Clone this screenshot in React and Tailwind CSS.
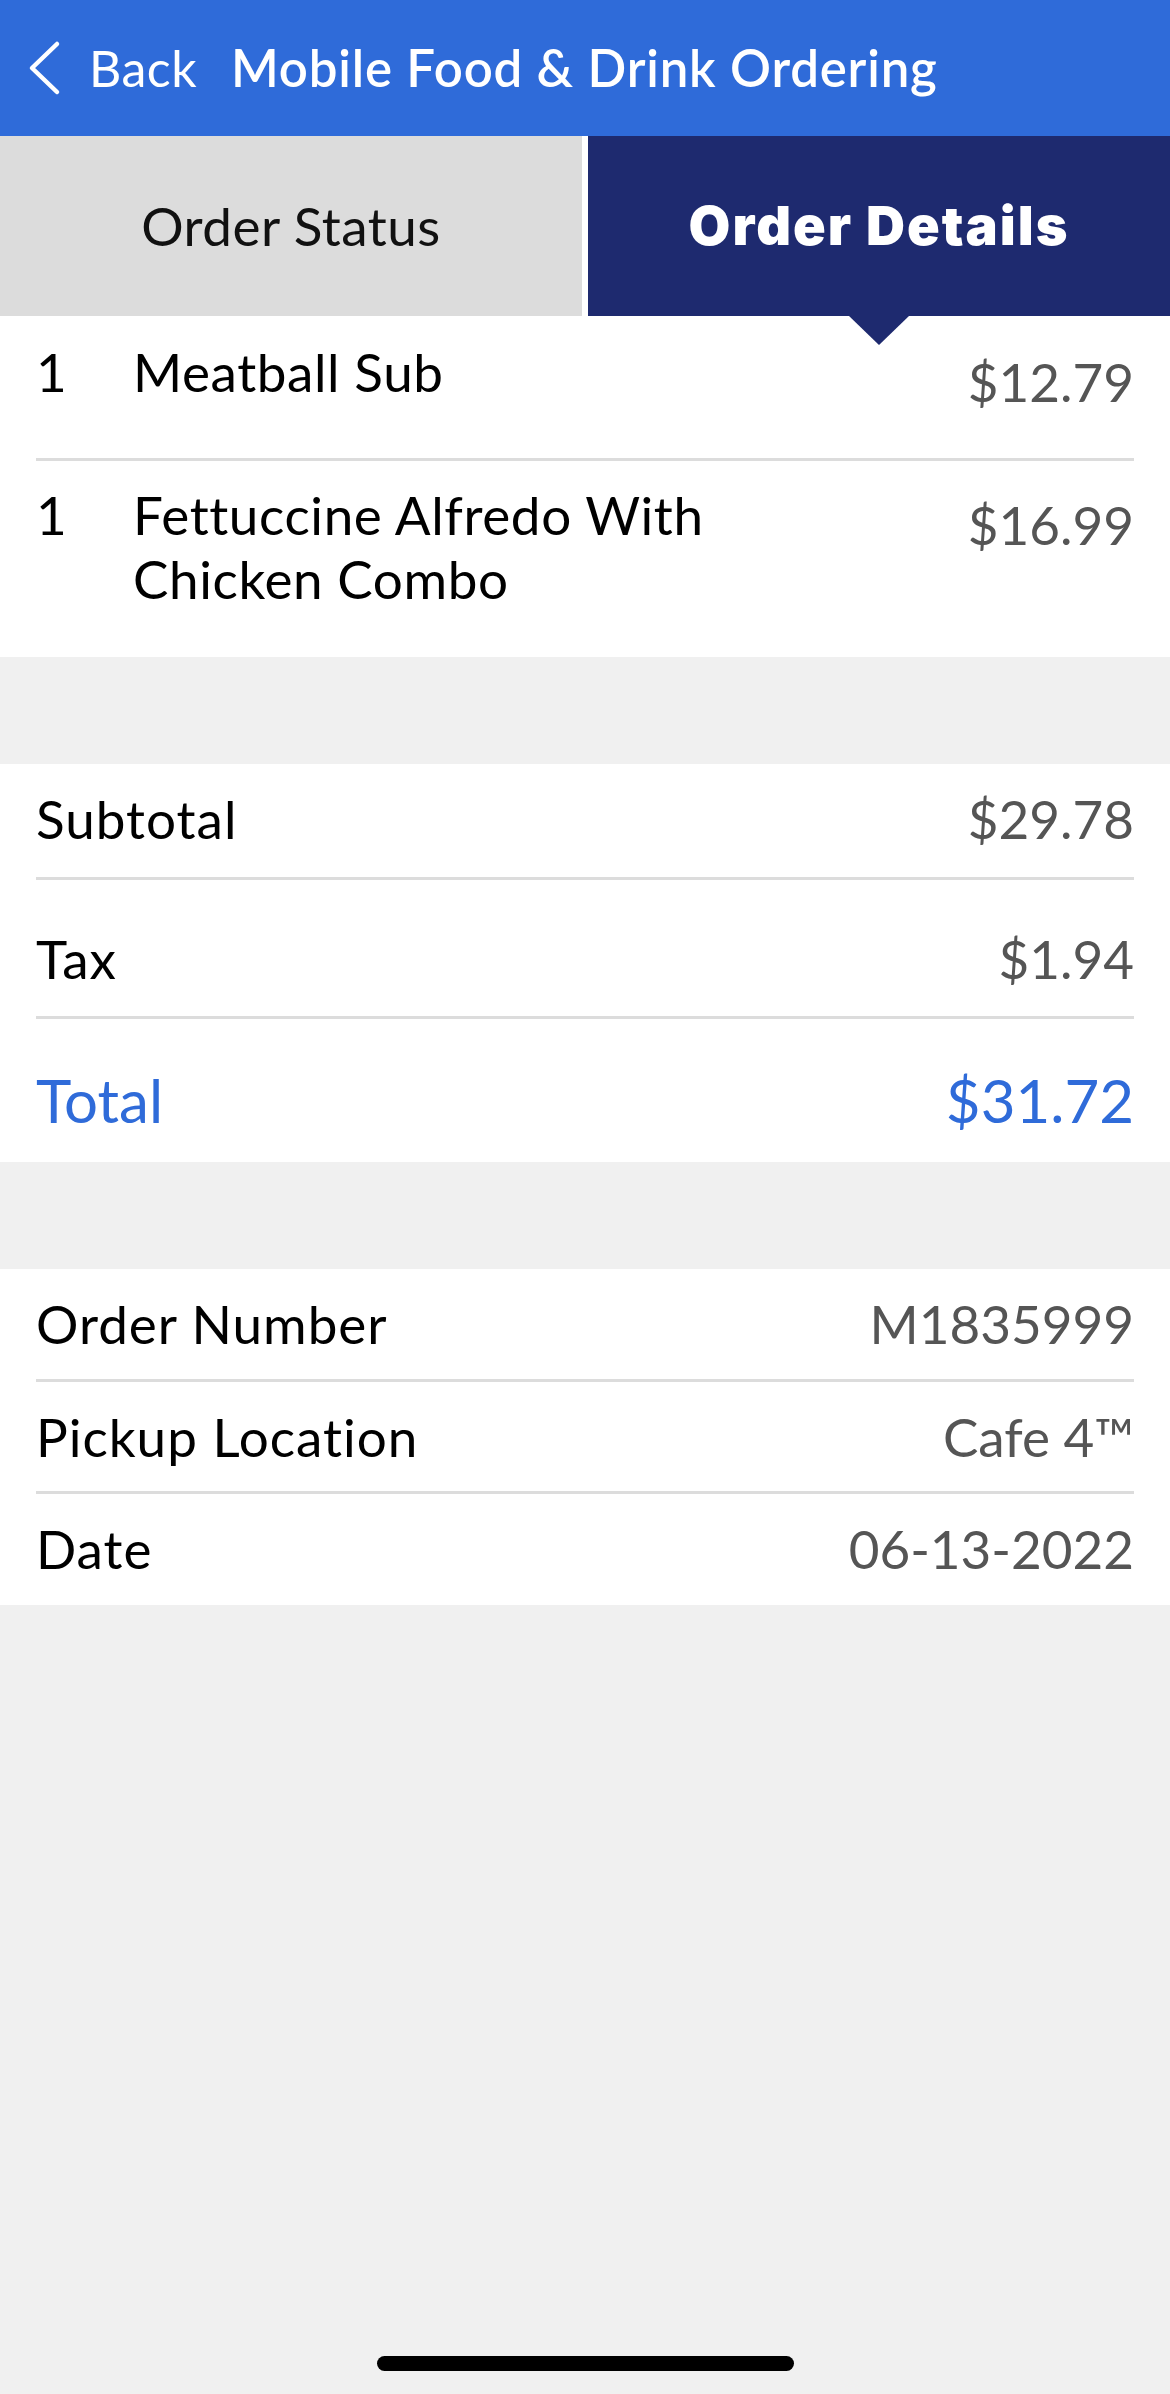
import React from "react";

const font = { fontFamily: "Lato, 'Noto Sans', 'Liberation Sans', sans-serif" };
const heavy = { fontFamily: "Inter, Lato, 'Noto Sans', sans-serif" };

function Sep() {
  return <div className="h-[3px] bg-[#dcdcdc]" />;
}

function Row({ label, value, pt, pb }) {
  return (
    <div className={`flex justify-between text-[53px] leading-[60px] ${pt} ${pb}`}>
      <span className="text-black tracking-[1px]">{label}</span>
      <span className="text-[#555]">{value}</span>
    </div>
  );
}

export default function App() {
  return (
    <div className="relative w-[1170px] h-[2394px] bg-[#f0f0f0] flex flex-col overflow-hidden" style={font}>
      {/* Header */}
      <div className="h-[136px] bg-[#2f6bd9] flex items-center text-white">
        <svg className="ml-[27px] w-[34px] h-[56px]" viewBox="0 0 34 56" fill="none">
          <polyline points="30,4 5,28 30,52" stroke="white" strokeWidth="4.5" strokeLinecap="round" strokeLinejoin="round" />
        </svg>
        <span className="ml-[28px] text-[50px] leading-[60px] font-normal tracking-[0.5px]">Back</span>
        <span className="ml-[34px] text-[51px] leading-[60px] font-semibold tracking-[0.8px]">Mobile Food &amp; Drink Ordering</span>
      </div>

      {/* Tabs */}
      <div className="h-[180px] flex gap-[6px] bg-white">
        <div className="w-[582px] bg-[#dcdcdc] flex items-center justify-center text-[53px] leading-[60px] tracking-[0.5px] text-[#111]">
          Order Status
        </div>
        <div className="flex-1 bg-[#1e2a6f] flex items-center justify-center text-[54px] leading-[60px] font-black tracking-[2px] text-white" style={heavy}>
          Order Details
        </div>
      </div>

      {/* Items */}
      <div className="relative bg-white px-[36px]">
        <svg className="absolute top-0 left-[849px] w-[60px] h-[29px]" viewBox="0 0 60 29">
          <polygon points="0,0 60,0 30,29" fill="#1e2a6f" />
        </svg>
        <div className="flex pt-[26px] pb-[46px] text-[53px] leading-[60px]">
          <span className="w-[97px] text-black">1</span>
          <span className="flex-1 text-black tracking-[0.6px]">Meatball Sub</span>
          <span className="mt-[10px] text-[#555]">$12.79</span>
        </div>
        <Sep />
        <div className="flex pt-[22px] pb-[46px] text-[53px] leading-[64px]">
          <span className="w-[97px] text-black">1</span>
          <span className="w-[620px] text-black tracking-[0.6px]">Fettuccine Alfredo With Chicken Combo</span>
          <span className="flex-1 text-right mt-[10px] text-[#555]">$16.99</span>
        </div>
      </div>

      <div className="h-[107px]" />

      {/* Totals */}
      <div className="bg-white px-[36px]">
        <Row label="Subtotal" value="$29.78" pt="pt-[25px]" pb="pb-[28px]" />
        <Sep />
        <Row label="Tax" value="$1.94" pt="pt-[49px]" pb="pb-[27px]" />
        <Sep />
        <div className="flex justify-between pt-[46px] pb-[27px] text-[60px] leading-[70px] text-[#2f6bd9]">
          <span>Total</span>
          <span>$31.72</span>
        </div>
      </div>

      <div className="h-[107px]" />

      {/* Info */}
      <div className="bg-white px-[36px]">
        <Row label="Order Number" value="M1835999" pt="pt-[25px]" pb="pb-[25px]" />
        <Sep />
        <Row label="Pickup Location" value="Cafe 4™" pt="pt-[25px]" pb="pb-[24px]" />
        <Sep />
        <Row label="Date" value="06-13-2022" pt="pt-[25px]" pb="pb-[26px]" />
      </div>

      {/* Home indicator */}
      <div className="absolute top-[2356px] left-[377px] w-[417px] h-[15px] rounded-full bg-black" />
    </div>
  );
}
